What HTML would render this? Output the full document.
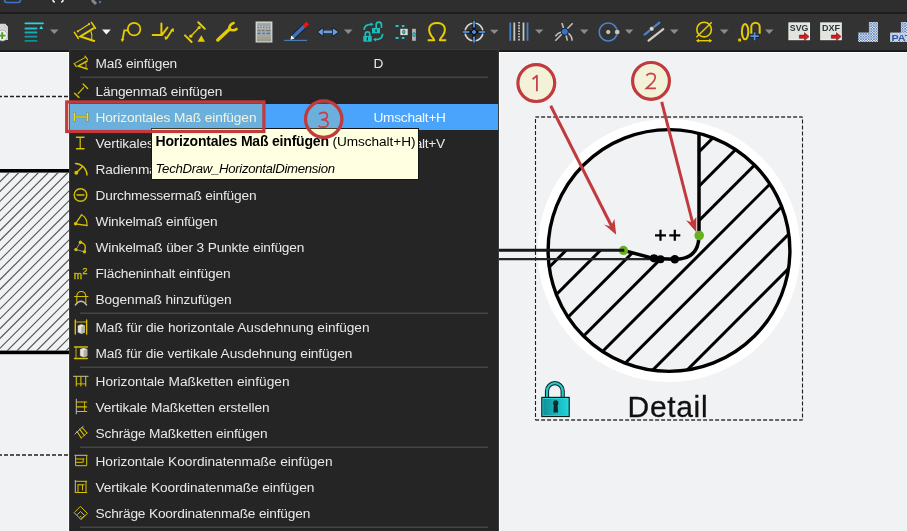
<!DOCTYPE html>
<html><head><meta charset="utf-8"><style>
html,body{margin:0;padding:0;width:907px;height:531px;overflow:hidden;background:#f1f2f3}
svg{display:block;position:absolute;left:0;top:0;will-change:transform}
text{font-family:"Liberation Sans",sans-serif}
</style></head><body>
<svg width="907" height="531" viewBox="0 0 907 531">
<defs>
<clipPath id="leftHatch"><rect x="0" y="172.5" width="69" height="178"/></clipPath>
<clipPath id="rightHatch"><path d="M699,100 L800,100 L800,400 L540,400 L540,250 L623,250 L654,259.5 L675,259.5 Q699,259 699,235 Z"/></clipPath>
<clipPath id="circClip"><circle cx="669" cy="250.5" r="121"/></clipPath>
<pattern id="chk" x="0.3" y="0.2" width="2.6" height="2.6" patternUnits="userSpaceOnUse"><rect width="2.6" height="2.6" fill="#eef0f2"/><path d="M0,0 L2.6,2.6 M2.6,0 L0,2.6" stroke="#2c5cac" stroke-width="0.6"/></pattern>
<linearGradient id="tblg" x1="0" x2="0" y1="0" y2="1"><stop offset="0" stop-color="#cacac2"/><stop offset="1" stop-color="#98988f"/></linearGradient>
</defs>
<!-- drawing background -->
<rect x="0" y="0" width="907" height="531" fill="#f1f2f3"/>

<rect x="0" y="52" width="907" height="1" fill="#ffffff"/>
<rect x="68" y="52" width="1" height="479" fill="#ffffff"/>
<rect x="499" y="52" width="1" height="479" fill="#ffffff"/>
<!-- LEFT DRAWING -->
<line x1="0" y1="96.5" x2="69" y2="96.5" stroke="#222" stroke-width="1.7" stroke-dasharray="4 2" stroke-dashoffset="2"/>
<rect x="0" y="169" width="69" height="3.6" fill="#000"/>
<g clip-path="url(#leftHatch)" stroke="#555" stroke-width="1.1" id="lh"><line x1="9.60" y1="172" x2="-169.40" y2="351"/><line x1="19.40" y1="172" x2="-159.60" y2="351"/><line x1="29.20" y1="172" x2="-149.80" y2="351"/><line x1="39.00" y1="172" x2="-140.00" y2="351"/><line x1="48.80" y1="172" x2="-130.20" y2="351"/><line x1="58.60" y1="172" x2="-120.40" y2="351"/><line x1="68.40" y1="172" x2="-110.60" y2="351"/><line x1="78.20" y1="172" x2="-100.80" y2="351"/><line x1="88.00" y1="172" x2="-91.00" y2="351"/><line x1="97.80" y1="172" x2="-81.20" y2="351"/><line x1="107.60" y1="172" x2="-71.40" y2="351"/><line x1="117.40" y1="172" x2="-61.60" y2="351"/><line x1="127.20" y1="172" x2="-51.80" y2="351"/><line x1="137.00" y1="172" x2="-42.00" y2="351"/><line x1="146.80" y1="172" x2="-32.20" y2="351"/><line x1="156.60" y1="172" x2="-22.40" y2="351"/><line x1="166.40" y1="172" x2="-12.60" y2="351"/><line x1="176.20" y1="172" x2="-2.80" y2="351"/><line x1="186.00" y1="172" x2="7.00" y2="351"/><line x1="195.80" y1="172" x2="16.80" y2="351"/><line x1="205.60" y1="172" x2="26.60" y2="351"/><line x1="215.40" y1="172" x2="36.40" y2="351"/><line x1="225.20" y1="172" x2="46.20" y2="351"/><line x1="235.00" y1="172" x2="56.00" y2="351"/><line x1="244.80" y1="172" x2="65.80" y2="351"/><line x1="254.60" y1="172" x2="75.60" y2="351"/></g>
<rect x="0" y="350.6" width="69" height="3.6" fill="#000"/>
<line x1="0" y1="455" x2="69" y2="455" stroke="#555" stroke-width="1.9" stroke-dasharray="4 2" stroke-dashoffset="2"/>

<!-- RIGHT DRAWING -->
<g fill="none" stroke-dasharray="4 2">
<line x1="535.4" y1="117" x2="802.5" y2="117" stroke="#3a3a3a" stroke-width="1.5" stroke-dashoffset="0.3"/>
<line x1="535.4" y1="420" x2="802.5" y2="420" stroke="#3a3a3a" stroke-width="1.5" stroke-dashoffset="0.3"/>
<line x1="535.5" y1="117" x2="535.5" y2="420" stroke="#1e1e1e" stroke-width="1.1" stroke-dashoffset="4"/>
<line x1="802.5" y1="117" x2="802.5" y2="420" stroke="#1e1e1e" stroke-width="1.1" stroke-dashoffset="3.6"/>
</g>
<circle cx="669" cy="250.5" r="126.8" fill="none" stroke="#fff" stroke-width="9.2"/>
<g clip-path="url(#circClip)"><g clip-path="url(#rightHatch)" stroke="#000" stroke-width="3" id="rh"><line x1="347.60" y1="400" x2="647.60" y2="100"/><line x1="382.00" y1="400" x2="682.00" y2="100"/><line x1="416.40" y1="400" x2="716.40" y2="100"/><line x1="450.80" y1="400" x2="750.80" y2="100"/><line x1="485.20" y1="400" x2="785.20" y2="100"/><line x1="519.60" y1="400" x2="819.60" y2="100"/><line x1="554.00" y1="400" x2="854.00" y2="100"/><line x1="588.40" y1="400" x2="888.40" y2="100"/><line x1="622.80" y1="400" x2="922.80" y2="100"/><line x1="657.20" y1="400" x2="957.20" y2="100"/><line x1="691.60" y1="400" x2="991.60" y2="100"/></g></g>
<circle cx="669" cy="250.5" r="120.9" fill="none" stroke="#000" stroke-width="3.4"/>
<line x1="499" y1="259.1" x2="661" y2="259.1" stroke="#22272c" stroke-width="2.2"/>
<path d="M699,133 L699,235 Q699,259.3 675,259.3 L654,258.6 L623.5,250.4" fill="none" stroke="#000" stroke-width="3.5"/>
<circle cx="654" cy="258.3" r="4.1" fill="#000"/>
<circle cx="660.5" cy="259.3" r="4" fill="#000"/>
<circle cx="674.8" cy="259.3" r="4.3" fill="#000"/>
<circle cx="623.5" cy="250.4" r="4.6" fill="#68b020"/>
<line x1="499" y1="250.3" x2="624.3" y2="250.3" stroke="#15181c" stroke-width="3"/>
<circle cx="699.2" cy="235.5" r="4.8" fill="#68b020"/>
<path d="M655,235.3 h11 M660.5,229.8 v11 M669.3,235.3 h11 M674.8,229.8 v11" stroke="#000" stroke-width="2.2"/>
<text x="627.6" y="416.6" font-size="30" fill="#111" stroke="#111" stroke-width="0.3" textLength="80">Detail</text>
<!-- lock -->
<defs><linearGradient id="lockg" x1="0" x2="1" y1="0" y2="0"><stop offset="0" stop-color="#0e949a"/><stop offset="1" stop-color="#22d2d8"/></linearGradient></defs>
<g>
<path d="M547,397 V391 a7.85,7.85 0 0 1 15.7,0 V397" fill="none" stroke="#0a1e20" stroke-width="4.2"/>
<path d="M547,397 V391 a7.85,7.85 0 0 1 15.7,0 V397" fill="none" stroke="#25c8cc" stroke-width="2.2"/>
<rect x="541.2" y="396.8" width="28.6" height="20.3" fill="#0a1e20"/>
<rect x="542.4" y="398" width="26.2" height="17.9" fill="#30dde2"/>
<rect x="543.2" y="398.8" width="24.6" height="16.3" fill="url(#lockg)"/>
<circle cx="555.7" cy="402.9" r="2.6" fill="#0a2a2c"/>
<path d="M553.9,403.5 L557.5,403.5 L558,412.5 L553.4,412.5 Z" fill="#0a2a2c"/>
</g>

<!-- TOP BARS -->
<rect x="0" y="0" width="907" height="12" fill="#2e2e2e"/>
<rect x="0" y="12" width="907" height="2" fill="#1e1e1e"/>
<rect x="0" y="14" width="907" height="36" fill="#333333"/>
<rect x="0" y="50" width="907" height="2" fill="#1c1c1c"/>
<g id="topstrip">
<rect x="4.5" y="-6" width="16" height="8.5" rx="2.5" fill="none" stroke="#3c74c8" stroke-width="1.6"/>
<path d="M53,-2 v2 a2,2 0 0 0 2,2 M63,-2 v2 a2,2 0 0 1 -2,2" fill="none" stroke="#eee" stroke-width="1.6"/>
<path d="M92,0 l4,4" stroke="#888" stroke-width="3"/>
<circle cx="100" cy="2" r="1.2" fill="#3c74c8"/>
</g>


<g id="toolbar">
<!-- page+plus -->
<path d="M-4,23.8 H5 L8,27 V40 H-4 Z" fill="#d4d4d4"/>
<path d="M5,23.8 V27 H8" fill="#ededed" stroke="#aaa" stroke-width="0.5"/>
<circle cx="2.2" cy="35.6" r="5.4" fill="#eeeeee" stroke="#999" stroke-width="0.6"/>
<path d="M-1,35.6 H5.6 M2.2,32.2 V39" stroke="#4aa51c" stroke-width="1.9"/>
<!-- cyan list -->
<g stroke-width="1.8" stroke-linecap="round">
<path d="M25.4,23.3 H43" stroke="#28d6e0"/>
<path d="M25.4,28.5 H36.5" stroke="#22c0cc"/>
<path d="M25.4,32.5 H36.5" stroke="#1aa8b2"/>
<path d="M25.4,36.7 H36.5" stroke="#179aa2"/>
<path d="M25.4,40.9 H36.5" stroke="#148c94"/>
</g>
<path d="M39.2,28.9 L41.2,25.8 L43.2,28.9 Z" fill="#28d6e0"/>
<g fill="#8c8c8c">
<path d="M50,29.6 h8.6 l-4.3,4.5 z"/>
<path d="M343.9,29.4 h8.7 l-4.35,4.7 z"/>
<path d="M490,29.8 h8.5 l-4.25,4.2 z"/>
<path d="M535.1,29.6 h8.2 l-4.1,4.2 z"/>
<path d="M580,29.6 h8.5 l-4.25,4.3 z"/>
<path d="M625.1,29.6 h8.2 l-4.1,4.3 z"/>
<path d="M669.9,29.6 h8.7 l-4.35,4.3 z"/>
<path d="M719.9,29.6 h8.7 l-4.35,4.3 z"/>
<path d="M764.9,29.6 h8.7 l-4.35,4.3 z"/>
</g>
<path d="M102,29.4 h8.8 l-4.4,5 z" fill="#f4f4f4"/>
<g stroke="#e6cc00" fill="none" stroke-linecap="round">
<!-- dimension -->
<path d="M74.4,32.4 L78.3,38.4 M91.4,22.4 L95.4,28.3" stroke-width="1.6"/>
<path d="M77.6,31.4 L89.2,24.1" stroke-width="1.2" stroke-dasharray="1.2 0.9"/>
<path d="M93.5,28.3 L80.3,36.4 L94.2,41" stroke-width="2"/>
<path d="M91.1,31.7 Q92.5,35.5 91.6,39.1" stroke-width="1.2"/>
<!-- radius -->
<circle cx="134.1" cy="29.1" r="6.3" stroke-width="1.7"/>
<path d="M127.8,30.4 H124.3 L122.6,39.5" stroke-width="1.8"/>
<!-- ⅃/ -->
<path d="M152.7,35.1 H162 M161.4,23.5 V34.9 M162,34.9 L167.5,27.5" stroke-width="2"/>
<path d="M166.5,38.5 L172.5,29.5" stroke-width="1.8"/>
<!-- dim triangle -->
<path d="M185,35.4 L191.6,42 M198.2,22.2 L204.8,28.8" stroke-width="2"/>
<path d="M190.8,36.2 L199.2,27.5" stroke-width="1.3"/>
<!-- wrench -->
<path d="M217.8,40 L229.6,29" stroke-width="3.4"/>
</g>
<g fill="#e6cc00">
<circle cx="77.8" cy="31.3" r="1.1"/><circle cx="89" cy="24.2" r="1.1"/>
<path d="M120.8,38.8 L124.4,39.3 L122,42.2 Z"/>
<path d="M165,40 L164.6,36 L168.4,37.8 Z M173.6,28 L174,32 L170.2,30.2 Z"/>
<circle cx="190.8" cy="36.2" r="1.6"/><circle cx="199.2" cy="27.5" r="1.6"/>
<path d="M201.3,35.3 L205,41.8 H197.6 Z"/>

</g>
<path d="M229.2,29.6 Q229,24.6 233.6,23" fill="none" stroke="#e6cc00" stroke-width="2.6" stroke-linecap="round"/>
<path d="M229.2,29.6 Q234,31.2 236.6,29" fill="none" stroke="#e6cc00" stroke-width="2.6" stroke-linecap="round"/>
<!-- table -->
<rect x="255.6" y="21.5" width="16.8" height="21" fill="#d8d8d0"/>
<rect x="256.8" y="22.6" width="14.4" height="18.8" fill="url(#tblg)"/>
<rect x="257.4" y="23.2" width="13.2" height="1.2" fill="#7aa6dc"/>
<rect x="257.4" y="24.6" width="13.2" height="1" fill="#8a8a84"/>
<g fill="#6b94c8">
<rect x="257.5" y="26.4" width="1.4" height="1"/><rect x="260.3" y="26.4" width="1.4" height="1"/><rect x="263.1" y="26.4" width="1.4" height="1"/><rect x="265.9" y="26.4" width="1.4" height="1"/><rect x="268.7" y="26.4" width="1.4" height="1"/>
<rect x="257.5" y="29.4" width="3.2" height="1"/><rect x="261.7" y="29.4" width="3" height="1"/><rect x="265.8" y="29.4" width="2.2" height="1"/><rect x="268.8" y="29.4" width="1.6" height="1"/>
<rect x="257.5" y="32.3" width="3.2" height="1"/><rect x="262.2" y="32.3" width="2.8" height="1"/><rect x="266.2" y="32.3" width="4" height="1"/>
</g>
<g fill="#5a5a56">
<rect x="257.5" y="27.4" width="1.4" height="0.8"/><rect x="260.3" y="27.4" width="1.4" height="0.8"/><rect x="263.1" y="27.4" width="1.4" height="0.8"/><rect x="265.9" y="27.4" width="1.4" height="0.8"/><rect x="268.7" y="27.4" width="1.4" height="0.8"/>
<rect x="257.5" y="30.4" width="3.2" height="0.8"/><rect x="261.7" y="30.4" width="3" height="0.8"/><rect x="265.8" y="30.4" width="4.6" height="0.8"/>
<rect x="257.5" y="33.3" width="3.2" height="0.8"/><rect x="262.2" y="33.3" width="2.8" height="0.8"/><rect x="266.2" y="33.3" width="4" height="0.8"/>
</g>
<!-- pencil -->
<path d="M284.2,40.4 H307.1" stroke="#4a7ab4" stroke-width="1.2"/>
<path d="M292.5,37.5 L304.5,26" stroke="#10243c" stroke-width="5.2"/>
<path d="M292.5,37.5 L304.5,26" stroke="#3f72b8" stroke-width="3.6"/>
<path d="M302.5,25.2 L306.5,21.6 L309,24.4 L305,28 Z" fill="#e01818"/>
<path d="M290.5,39.8 L291.3,35.6 L294.6,38.6 Z" fill="#f4f4f4"/>
<!-- double arrow -->
<path d="M317.3,32 L323.3,27.5 V36.5 Z M338.9,32 L332.3,27.5 V36.5 Z" fill="#6a9ee0" stroke="#0c1420" stroke-width="0.9"/>
<rect x="323.6" y="30.6" width="8.4" height="2.5" fill="#6a9ee0"/>
<!-- locks -->
<g fill="#1fbcbc">
<rect x="363.3" y="35.9" width="8.4" height="5.8"/>
<rect x="372" y="28" width="8" height="5.3"/>
</g>
<g fill="none" stroke="#1fbcbc" stroke-width="1.7">
<path d="M365.3,36 V34 a2.2,2.2 0 0 1 4.4,0 V36"/>
<path d="M376.2,28 V24.8 a2.6,2.6 0 0 1 5.2,0 V28"/>
<path d="M364,29.8 Q364.5,24.3 371,24.3"/>
<path d="M382.6,33.8 Q382.6,39.6 375.2,39.6"/>
</g>
<path d="M370.6,22.4 L373.6,24.3 L370.6,26.2 Z M376,37.7 L373,39.6 L376,41.5 Z" fill="#1fbcbc"/>
<rect x="366.8" y="37.2" width="1.2" height="3.2" fill="#0a2a2a"/>
<rect x="375.4" y="29.3" width="1.2" height="2.8" fill="#0a2a2a"/>
<!-- icon 11 -->
<g fill="#22c8d2">
<rect x="395.4" y="25" width="3.4" height="2" rx="1"/><rect x="401.6" y="25" width="3" height="2" rx="1"/>
<rect x="395.4" y="36.9" width="3.4" height="2" rx="1"/><rect x="401.6" y="36.9" width="3" height="2" rx="1"/>
</g>
<rect x="400.3" y="28.8" width="7.4" height="6.3" fill="#dcdcd4"/>
<ellipse cx="403.8" cy="31.9" rx="1.3" ry="2" fill="#22c8d2" stroke="#0a3038" stroke-width="0.5"/>
<rect x="412.1" y="28.8" width="3.7" height="12" fill="#b8b8b0"/>
<path d="M414,32.2 L415.8,34.6 L414,37 L412.2,34.6 Z" fill="#22c8d2" stroke="#0a3038" stroke-width="0.4"/>
<!-- omega -->
<path d="M427.7,40.2 H434.2 L433.2,38.2 C429.5,34 428.6,30 429.5,27.2 C430.8,24 433.5,23.1 437,23.1 C440.5,23.1 443.2,24 444.5,27.2 C445.4,30 444.5,34 440.8,38.2 L439.8,40.2 H446.2" fill="none" stroke="#e6cc00" stroke-width="2" stroke-linejoin="round"/>
<!-- crosshair -->
<circle cx="474" cy="32" r="9" fill="none" stroke="#d4d4cc" stroke-width="1.7"/>
<path d="M474,20.6 V43 M462.6,32 H485.3" stroke="#0a0f18" stroke-width="3"/>
<path d="M474,20.8 V27.4 M474,30 V34 M474,36.6 V42.8 M462.8,32 H469.4 M472,32 H476 M478.6,32 H485.1" stroke="#4a84cc" stroke-width="2"/>
<!-- vertical lines -->
<g stroke-width="1.8">
<path d="M510.3,22.5 V40.7 M527.5,22.5 V40.7" stroke="#4a80c8"/>
<path d="M514.3,22.5 V40.7 M523.5,22.5 V40.7" stroke="#c8c8c0"/>
<path d="M519,22 V41.5" stroke="#c8c8c0" stroke-dasharray="1.6 1.2"/>
</g>
<!-- curves with dot -->
<g fill="none" stroke="#c4c4bc" stroke-width="1.5">
<path d="M555.3,40.7 L572.7,23.3"/>
<path d="M561.9,23 Q563.5,28 564.8,31.7 Q566.5,36 567.4,40.7"/>
<path d="M555.3,36.2 Q558,33 562,31.8 M567.5,32.6 Q572,35.5 572.2,40.7"/>
</g>
<circle cx="564.8" cy="31.7" r="3.6" fill="#3a72c0" stroke="#0a0f18" stroke-width="0.8"/>
<!-- circle with dots -->
<circle cx="608.2" cy="32" r="9" fill="none" stroke="#4a84cc" stroke-width="1.6"/>
<circle cx="608.2" cy="32" r="2.3" fill="#d8d8d0" stroke="#1a1a1a" stroke-width="0.4"/>
<circle cx="617.2" cy="32" r="2.5" fill="#d8d8d0" stroke="#1a1a1a" stroke-width="0.4"/>
<circle cx="608.2" cy="32" r="0.7" fill="#999"/><circle cx="617.2" cy="32" r="0.7" fill="#999"/>
<!-- line with dot -->
<path d="M644.6,34.6 L659.4,22.7" stroke="#4a84cc" stroke-width="2.2" stroke-linecap="round"/>
<path d="M648.6,40.7 L663.3,29.1" stroke="#cfcfc6" stroke-width="2.2" stroke-linecap="round"/>
<circle cx="651.7" cy="28.8" r="2.3" fill="#d8d8d0" stroke="#1a1a1a" stroke-width="0.4"/>
<!-- diameter -->
<g fill="none" stroke="#e6cc00">
<circle cx="704.1" cy="29.6" r="7.3" stroke-width="1.6"/>
<path d="M696.4,37.3 L711.8,22.2" stroke-width="1.5"/>
<path d="M697.5,40.7 H710.7" stroke-width="1.4"/>
</g>
<path d="M695.9,40.7 L699,38.8 V42.6 Z M712.3,40.7 L709.2,38.8 V42.6 Z" fill="#e6cc00"/>
<!-- .0∩+ -->
<rect x="738.2" y="38.6" width="2.8" height="2.8" fill="#e6cc00"/>
<ellipse cx="745.1" cy="31.6" rx="3.2" ry="7.7" fill="none" stroke="#e6cc00" stroke-width="2"/>
<path d="M751.3,33.8 V27 a4.2,4.2 0 0 1 8.4,0 V33.8" fill="none" stroke="#e6cc00" stroke-width="2"/>
<path d="M749.8,36.2 H759.3 M754.6,31.7 V41" stroke="#0c1420" stroke-width="2.8"/>
<path d="M750.3,36.2 H758.8 M754.6,32.2 V40.5" stroke="#5a94dc" stroke-width="1.8"/>
<!-- SVG / DXF -->
<rect x="788.4" y="22.4" width="21.6" height="17.8" fill="#f4f4f2"/>
<rect x="789.2" y="23.2" width="20" height="16.2" fill="#e2e4e0"/>
<text x="789.8" y="30.7" font-size="9.2" font-weight="bold" fill="#2c343c" textLength="18.5" lengthAdjust="spacingAndGlyphs">SVG</text>
<rect x="820.2" y="22.4" width="21.6" height="17.8" fill="#f4f4f2"/>
<rect x="821" y="23.2" width="20" height="16.2" fill="#e2e4e0"/>
<text x="822" y="30.7" font-size="9.2" font-weight="bold" fill="#2c343c" textLength="18" lengthAdjust="spacingAndGlyphs">DXF</text>
<path d="M799.4,35.1 H804.5 V32.7 L809,36.6 L804.5,40.6 V38.3 H799.4 Z M831.4,35.1 H836.5 V32.7 L841,36.6 L836.5,40.6 V38.3 H831.4 Z" fill="#e01a1a" stroke="#500" stroke-width="0.5"/>
<!-- hatch icons -->
<path d="M868.9,22.1 H878 V41.9 H858.2 V32.5 H868.9 Z" fill="url(#chk)"/>
<path d="M900.9,22.1 H910 V41.9 H890.2 V32.5 H900.9 Z" fill="url(#chk)"/>
<rect x="890.2" y="33" width="17" height="8.5" fill="#dfe4ee" opacity="0.6"/>
<text x="891.4" y="41" font-size="9.6" font-weight="bold" fill="#2a58a8" textLength="20" lengthAdjust="spacingAndGlyphs">PAT</text>
</g>

<!-- MENU -->
<rect x="69" y="49" width="430" height="482" fill="#3a3a3a"/>
<rect x="70" y="50" width="428" height="481" fill="#252525"/>
<rect x="70" y="104" width="428" height="26" fill="#4aa4fc"/>
<g fill="#444">
<rect x="80" y="76.5" width="408" height="1.5"/>
<rect x="80" y="312.5" width="408" height="1.5"/>
<rect x="80" y="366.5" width="408" height="1.5"/>
<rect x="80" y="446.5" width="408" height="1.5"/>
<rect x="80" y="526.5" width="408" height="1.5"/>
</g>
<g font-size="13.7" fill="#e8e8e8">
<text x="95.5" y="68.2" textLength="81.7">Maß einfügen</text>
<text x="95.5" y="96.2" textLength="126.8">Längenmaß einfügen</text>
<text x="95.5" y="122.2" textLength="161" fill="#f4f8ff">Horizontales Maß einfügen</text>
<text x="95.5" y="148.2" textLength="144.3">Vertikales Maß einfügen</text>
<text x="95.5" y="174.2" textLength="124.9">Radienmaß einfügen</text>
<text x="95.5" y="200.2" textLength="161">Durchmessermaß einfügen</text>
<text x="95.5" y="226.2" textLength="122">Winkelmaß einfügen</text>
<text x="95.5" y="252.2" textLength="208.9">Winkelmaß über 3 Punkte einfügen</text>
<text x="95.5" y="278.2" textLength="135.1">Flächeninhalt einfügen</text>
<text x="95.5" y="304.2" textLength="136.1">Bogenmaß hinzufügen</text>
<text x="95.5" y="332.2" textLength="274">Maß für die horizontale Ausdehnung einfügen</text>
<text x="95.5" y="358.2" textLength="256.8">Maß für die vertikale Ausdehnung einfügen</text>
<text x="95.5" y="386.2" textLength="194">Horizontale Maßketten einfügen</text>
<text x="95.5" y="412.2" textLength="174.1">Vertikale Maßketten erstellen</text>
<text x="95.5" y="438.2" textLength="172.1">Schräge Maßketten einfügen</text>
<text x="95.5" y="466.2" textLength="237">Horizontale Koordinatenmaße einfügen</text>
<text x="95.5" y="492.2" textLength="218.8">Vertikale Koordinatenmaße einfügen</text>
<text x="95.5" y="518.2" textLength="214.8">Schräge Koordinatenmaße einfügen</text>
<text x="373.5" y="68.2">D</text>
<text x="373.5" y="122.2" textLength="72.5" fill="#f4f8ff">Umschalt+H</text>
<text x="373.5" y="148.2" textLength="71.6">Umschalt+V</text>
</g>


<g id="menuicons" fill="none" stroke="#d8c000" stroke-linecap="round">
<!-- 1 dim -->
<path d="M74.1,63.3 L76.3,66.6 M84.9,56.1 L87.6,59.3" stroke-width="1.2"/>
<path d="M75.4,62.9 L85.4,57.4" stroke-width="1"/>
<path d="M87.2,61 L78.1,66 L87.2,69" stroke-width="1.5"/>
<path d="M85.6,62.5 Q86.6,65 86,68" stroke-width="0.9"/>
<!-- 2 length -->
<path d="M78.1,93.6 L83.6,87.7" stroke-width="1.1"/>
<path d="M74.5,93.2 L79,97.4 M83.1,84.1 L87.6,88.6" stroke-width="1.4"/>
<!-- 3 horizontal -->
<path d="M75,117 H87" stroke="#3a3a10" stroke-width="2.6" stroke-opacity="0.35"/>
<path d="M75,117 H87" stroke="#c8b000" stroke-width="1.8"/>
<path d="M74.4,113.3 V120.5 M87.4,113.3 V120.5" stroke="#2a2a08" stroke-width="2.6" stroke-opacity="0.45"/>
<path d="M74.4,113.3 V120.5 M87.4,113.3 V120.5" stroke="#f2dc20" stroke-width="1.6"/>
<!-- 4 vertical -->
<path d="M76.5,137.3 H84 M76.5,148.8 H84" stroke-width="1.5"/>
<path d="M80.2,137.5 V148.5" stroke-width="1.2"/>
<!-- 5 radius -->
<path d="M75.5,163.5 A12,12 0 0 1 87,175" stroke-width="1.4"/>
<path d="M76.3,172.8 L82.8,166.3" stroke-width="1.4"/>
<!-- 6 diameter -->
<circle cx="80.5" cy="195" r="6.3" stroke-width="1.4"/>
<path d="M77,195 H84" stroke-width="1.4"/>
<!-- 7 angle -->
<path d="M75.5,223.8 L81.5,214.8 M75.5,223.8 L87,225.5" stroke-width="1.3"/>
<path d="M81.5,214.8 Q87.5,218 87,225.5" stroke-width="1.1"/>
<!-- 8 3-point angle -->
<path d="M75.9,249.6 L80.4,242.3 M75.9,249.6 L84.5,251.8" stroke="#b0b0a8" stroke-width="0.8"/>
<path d="M80.4,242.3 Q87.5,243.5 84.5,251.8" stroke-width="1.3"/>
<!-- 10 arc length -->
<path d="M76.8,296.5 Q77,291.5 81.3,291.5 Q85.6,291.5 85.8,296.5" stroke-width="1.1"/>
<path d="M76.8,296.5 V303 M85.8,296.5 V303 M74.5,296.5 H88" stroke-width="1"/>
<path d="M75.3,305 Q81,297.5 86.6,305" stroke="#c0c0b8" stroke-width="1.3"/>
<!-- 11 ext horizontal -->
<path d="M75.3,320 V334 M86.6,320 V334" stroke-width="1.4"/><path d="M76,322 H86" stroke-width="0.9"/>
<!-- 12 ext vertical -->
<path d="M74.5,347 H87.3 M74.5,358.5 H87.3" stroke-width="1.4"/><path d="M76,347.5 V358" stroke-width="0.9"/>
<!-- 13 horiz chain -->
<path d="M73.5,376.3 H88.1" stroke="#c0c0b8" stroke-width="1"/>
<path d="M76.3,376.5 V386 M80.9,376.5 V386 M85.7,376.5 V386" stroke-width="1.1"/>
<path d="M76.3,383.9 H85.7" stroke-width="0.9"/>
<!-- 14 vert chain -->
<path d="M76.3,399.2 V413.9" stroke="#c0c0b8" stroke-width="1"/>
<path d="M76.5,402 H86.7 M76.5,406.9 H86.7 M76.5,411.5 H86.7" stroke-width="1.1"/>
<path d="M84.6,402 V411.5" stroke-width="0.9"/>
<!-- 15 oblique chain -->
<path d="M74.9,434 L83.2,426.4" stroke="#c0c0b8" stroke-width="1"/>
<path d="M77,431.3 L81.2,438 M79.5,429.2 L84.3,435.3 M82,427.3 L87,433" stroke-width="1.1"/>
<path d="M81.2,438 L87,433" stroke-width="0.9"/>
<!-- 16 horiz coord -->
<path d="M74.9,455.3 H87" stroke="#c0c0b8" stroke-width="1"/>
<path d="M75.6,455.5 V465.7 H86.7 V455.5 M75.6,459 H84 M75.6,462.3 H83.2 V459" stroke-width="1"/>
<!-- 17 vert coord -->
<path d="M75.3,480.5 V492.5" stroke="#c0c0b8" stroke-width="1"/>
<path d="M75.5,481.3 H86.7 M75.5,492.5 H86.7 M86,481.3 V492.5 M78,484.8 V492.5 M78,484.8 H84 M82.5,484.8 V490" stroke-width="1"/>
<!-- 18 oblique coord -->
<path d="M74.2,512.7 L81.1,519.6" stroke="#c0c0b8" stroke-width="1"/>
<path d="M74.8,512 L80.4,506.4 L87.4,513.4 L81.6,519 M77.5,514.5 L80.5,511.5 L84.5,515.5 L81.8,518.2 M80,517 L80.6,516.4 L81.5,517.3" stroke-width="1"/>
</g>
<g fill="#d8c000">
<circle cx="75.6" cy="223.8" r="1.8"/>
<circle cx="75.9" cy="249.6" r="1.7"/><circle cx="80.4" cy="242.3" r="1.7"/><circle cx="84.5" cy="251.8" r="1.7"/>
<circle cx="76.3" cy="172.8" r="2"/>
</g>
<text x="73.8" y="279.2" font-size="10.5" fill="#d8c000" stroke="#d8c000" stroke-width="0.3" textLength="8.4" lengthAdjust="spacingAndGlyphs">m</text>
<text x="82.6" y="274.2" font-size="9" fill="#d8c000" stroke="#d8c000" stroke-width="0.3" textLength="5" lengthAdjust="spacingAndGlyphs">2</text>
<g>
<path d="M77.6,325.5 L81.3,324 L85,325.5 V332.5 L81.3,334 L77.6,332.5 Z" fill="#e4e4dc" stroke="#222" stroke-width="0.4"/>
<path d="M81.3,327 V334 L85,332.5 V325.5 Z" fill="#b0b0a8"/>
<path d="M79.9,349 L83.6,347.6 L87.3,349 V356 L83.6,357.5 L79.9,356 Z" fill="#e4e4dc" stroke="#222" stroke-width="0.4"/>
<path d="M83.6,350.5 V357.5 L87.3,356 V349 Z" fill="#b0b0a8"/>
</g>

<!-- TOOLTIP -->
<rect x="151" y="128" width="268" height="52" fill="#141414"/>
<rect x="152" y="129" width="266" height="50" fill="#ffffe1"/>
<text x="155.5" y="145.6" font-size="14" font-weight="bold" fill="#000" textLength="173.5">Horizontales Maß einfügen</text>
<text x="332.6" y="145.6" font-size="13.6" fill="#000" textLength="82.9">(Umschalt+H)</text>
<text x="155.6" y="172.7" font-size="13.2" font-style="italic" fill="#000" textLength="179.4">TechDraw_HorizontalDimension</text>

<!-- ANNOTATIONS -->
<rect x="66.7" y="101.9" width="197.2" height="29.6" fill="rgba(240,225,100,0.2)" stroke="#c03a3e" stroke-width="3.2"/>
<circle cx="323.7" cy="119.1" r="18.2" fill="rgba(240,225,100,0.2)" stroke="#c03a3e" stroke-width="3.3"/>
<path d="M319,114.2 Q320.8,112.4 323.4,112.4 Q327.4,112.6 327.4,115.9 Q327.2,119.6 321.2,119.7 Q328.2,119.8 328.1,123.5 Q327.8,127.2 323.2,127.2 Q320.2,127.2 318.5,125.8" fill="none" stroke="#c8404a" stroke-width="1.7"/>
<circle cx="536.3" cy="83.1" r="18.4" fill="#f3f1d8" stroke="#c03a3e" stroke-width="3.2"/>
<path d="M532.6,79.2 L536.9,75.6 V91.3" fill="none" stroke="#c8404a" stroke-width="1.8" stroke-linejoin="round"/>
<circle cx="651" cy="80.9" r="18.4" fill="#f3f1d8" stroke="#c03a3e" stroke-width="3.2"/>
<path d="M646.4,75.6 Q648.2,73.5 650.8,73.4 Q655.2,73.6 655.2,77.3 Q655,80.5 651,84.2 L646.4,88.3 H655.9" fill="none" stroke="#c8404a" stroke-width="1.7"/>
<line x1="550.7" y1="105.8" x2="612" y2="227" stroke="#c03a3e" stroke-width="3"/>
<path d="M616.2,234.7 L604.1,224.4 L610.8,226.4 L614.4,219 Z" fill="#c03a3e"/>
<line x1="661.7" y1="101.9" x2="693" y2="224" stroke="#c03a3e" stroke-width="3"/>
<path d="M696.3,232.3 L686,220.2 L692,222.5 L696.3,217.1 Z" fill="#c03a3e"/>
</svg>
</body></html>
